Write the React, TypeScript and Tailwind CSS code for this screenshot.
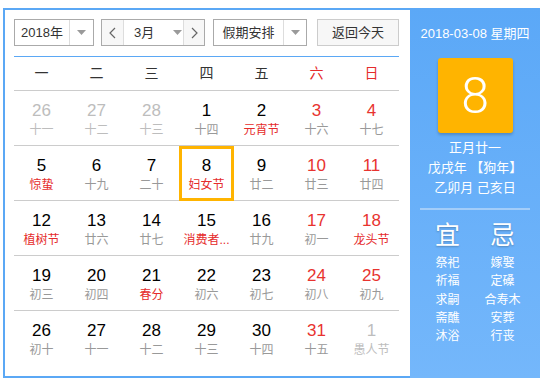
import React from "react";

type Day = {
  n: number;
  lunar: string;
  other?: boolean;
  weekend?: boolean;
  festival?: boolean;
  selected?: boolean;
};

const weekdays = ["一", "二", "三", "四", "五", "六", "日"];

const rows: Day[][] = [
  [
    { n: 26, lunar: "十一", other: true },
    { n: 27, lunar: "十二", other: true },
    { n: 28, lunar: "十三", other: true },
    { n: 1, lunar: "十四" },
    { n: 2, lunar: "元宵节", festival: true },
    { n: 3, lunar: "十六", weekend: true },
    { n: 4, lunar: "十七", weekend: true },
  ],
  [
    { n: 5, lunar: "惊蛰", festival: true },
    { n: 6, lunar: "十九" },
    { n: 7, lunar: "二十" },
    { n: 8, lunar: "妇女节", festival: true, selected: true },
    { n: 9, lunar: "廿二" },
    { n: 10, lunar: "廿三", weekend: true },
    { n: 11, lunar: "廿四", weekend: true },
  ],
  [
    { n: 12, lunar: "植树节", festival: true },
    { n: 13, lunar: "廿六" },
    { n: 14, lunar: "廿七" },
    { n: 15, lunar: "消费者...", festival: true },
    { n: 16, lunar: "廿九" },
    { n: 17, lunar: "初一", weekend: true },
    { n: 18, lunar: "龙头节", weekend: true, festival: true },
  ],
  [
    { n: 19, lunar: "初三" },
    { n: 20, lunar: "初四" },
    { n: 21, lunar: "春分", festival: true },
    { n: 22, lunar: "初六" },
    { n: 23, lunar: "初七" },
    { n: 24, lunar: "初八", weekend: true },
    { n: 25, lunar: "初九", weekend: true },
  ],
  [
    { n: 26, lunar: "初十" },
    { n: 27, lunar: "十一" },
    { n: 28, lunar: "十二" },
    { n: 29, lunar: "十三" },
    { n: 30, lunar: "十四" },
    { n: 31, lunar: "十五", weekend: true },
    { n: 1, lunar: "愚人节", other: true },
  ],
];

const yi = ["祭祀", "祈福", "求嗣", "斋醮", "沐浴"];
const ji = ["嫁娶", "定磉", "合寿木", "安葬", "行丧"];

function Caret() {
  return (
    <svg width="9" height="5" viewBox="0 0 9 5">
      <path d="M0 0 H9 L4.5 5 Z" fill="#9a9a9a" />
    </svg>
  );
}

function Chevron({ dir }: { dir: "left" | "right" }) {
  return (
    <svg width="7" height="12" viewBox="0 0 7 12">
      <polyline
        points={dir === "left" ? "6,1 1,6 6,11" : "1,1 6,6 1,11"}
        fill="none"
        stroke="#666"
        strokeWidth="1.2"
      />
    </svg>
  );
}

function DayCell({ d }: { d: Day }) {
  const numColor = d.other
    ? "text-[#bdbdbd]"
    : d.weekend
    ? "text-[#e8332f]"
    : "text-black";
  const lunarColor = d.other
    ? "text-[#bdbdbd]"
    : d.festival
    ? "text-[#e52b2b]"
    : "text-[#999]";
  return (
    <div
      className={`flex flex-col items-center ${
        d.selected ? "border-[3px] border-[#ffb400] -mb-[1px] pt-[7px]" : "pt-[10px]"
      }`}
    >
      <div className={`text-[17px] leading-[20px] ${numColor}`}>{d.n}</div>
      <div className={`text-[12px] leading-[18px] ${lunarColor}`}>{d.lunar}</div>
    </div>
  );
}

export default function App() {
  return (
    <div className="w-[543px] h-[381px] bg-white font-['Liberation_Sans','Noto_Sans_CJK_SC',sans-serif]">
      <div className="ml-[3px] mt-[8px] w-[537px] h-[370px] border-2 border-r-0 border-[#5ba8f5] flex">
        <div className="flex-1 pl-[9px] pr-[11px] pt-[9px]">
          <div className="flex h-[27px] text-[13px] text-[#333]">
            <div className="w-[80px] flex border border-[#aaa]">
              <div className="w-[55px] flex items-center justify-center border-r border-[#ddd]">
                2018年
              </div>
              <div className="flex-1 flex items-center justify-center">
                <Caret />
              </div>
            </div>
            <div className="ml-[7px] w-[104px] flex border border-[#aaa]">
              <div className="w-[22px] flex items-center justify-center bg-[#f7f7f7] border-r border-[#ddd]">
                <Chevron dir="left" />
              </div>
              <div className="w-[60px] flex items-center pl-[10px] gap-[19px] border-r border-[#ddd]">
                <span>3月</span>
                <Caret />
              </div>
              <div className="flex-1 flex items-center justify-center bg-[#f7f7f7]">
                <Chevron dir="right" />
              </div>
            </div>
            <div className="ml-[8px] w-[94px] flex border border-[#aaa]">
              <div className="w-[70px] flex items-center justify-center border-r border-[#ddd]">
                假期安排
              </div>
              <div className="flex-1 flex items-center justify-center">
                <Caret />
              </div>
            </div>
            <div className="ml-[10px] w-[82px] flex items-center justify-center border border-[#ccc] bg-[#f7f7f7]">
              返回今天
            </div>
          </div>

          <div className="mt-[10px] border-t border-[#5ba8f5]">
            <div className="grid grid-cols-7 h-[34px] border-b border-[#ccc] text-[14px]">
              {weekdays.map((w, i) => (
                <div
                  key={w}
                  className={`flex items-center justify-center ${
                    i >= 5 ? "text-[#e52b2b]" : "text-[#333]"
                  }`}
                >
                  {w}
                </div>
              ))}
            </div>
            {rows.map((row, ri) => (
              <div
                key={ri}
                className={`grid grid-cols-7 h-[55px] ${
                  ri < rows.length - 1 ? "border-b border-[#ccc]" : ""
                }`}
              >
                {row.map((d, i) => (
                  <DayCell key={i} d={d} />
                ))}
              </div>
            ))}
          </div>
        </div>

        <div className="w-[130px] -mt-[2px] -mb-[2px] bg-linear-to-b from-[#5ba8f7] to-[#74b7fb] text-white flex flex-col items-center">
          <div className="mt-[16px] text-[13px] leading-[20px]">2018-03-08 星期四</div>
          <div className="mt-[14px] w-[75px] h-[75px] rounded-[3px] bg-[#ffb400] shadow-[0_2px_3px_rgba(0,0,0,0.2)] flex items-center justify-center font-['Roboto',sans-serif] font-light text-[50px] leading-none">
            8
          </div>
          <div className="mt-[5px] text-[13px] leading-[20px] text-center">
            <div>正月廿一</div>
            <div>戊戌年 【狗年】</div>
            <div>乙卯月 己亥日</div>
          </div>
          <div className="mt-[10px] w-[110px] h-[2px] bg-[#a3cdf9]" />
          <div className="mt-[10px] grid grid-cols-2 w-[110px] text-center">
            <div className="text-[25px] leading-[30px] [text-shadow:0_1px_2px_rgba(0,0,0,0.25)]">宜</div>
            <div className="text-[25px] leading-[30px] [text-shadow:0_1px_2px_rgba(0,0,0,0.25)]">忌</div>
            <div className="mt-[4px] text-[12px] leading-[18.3px]">
              {yi.map((t) => (
                <div key={t}>{t}</div>
              ))}
            </div>
            <div className="mt-[4px] text-[12px] leading-[18.3px]">
              {ji.map((t) => (
                <div key={t}>{t}</div>
              ))}
            </div>
          </div>
        </div>
      </div>
    </div>
  );
}
